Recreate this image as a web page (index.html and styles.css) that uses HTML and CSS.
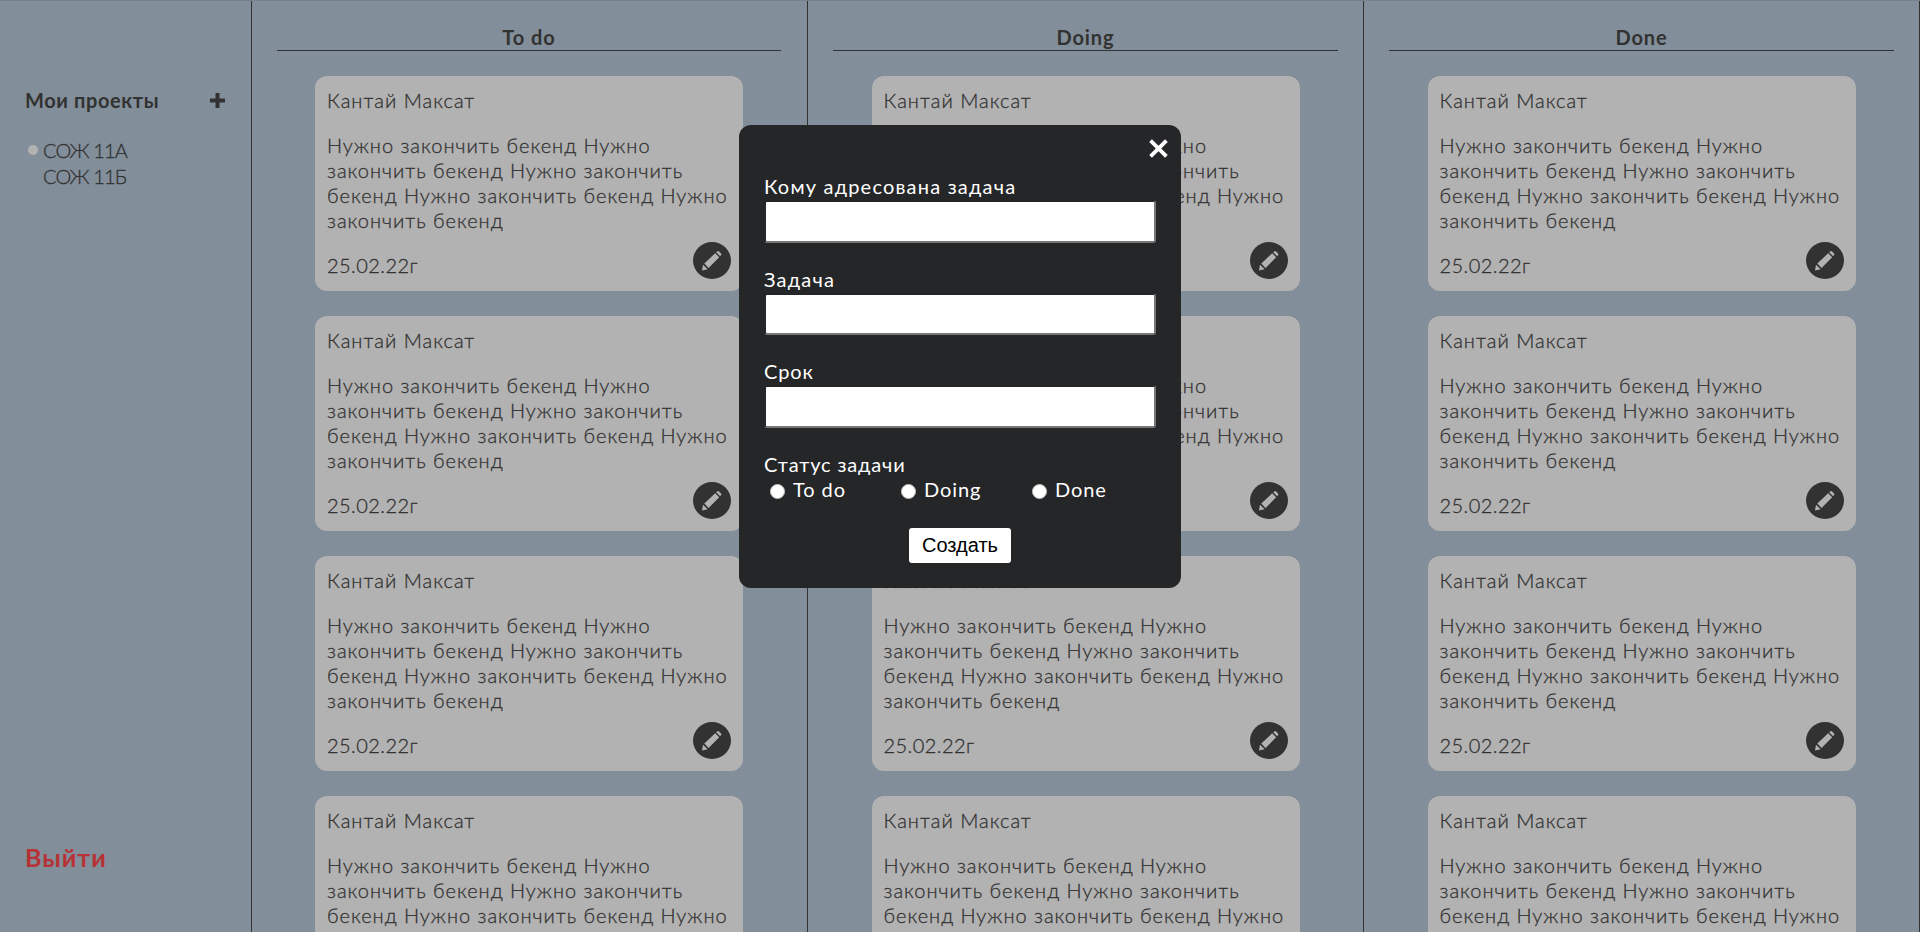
FILE: index.html
```html
<!DOCTYPE html>
<html lang="ru">
<head>
<meta charset="utf-8">
<title>Мои проекты</title>
<link rel="stylesheet" href="styles.css">
</head>
<body>
<div class="app">
  <aside class="sidebar">
    <div class="sidebar-head">
      <h2 class="sidebar-title">Мои проекты</h2>
      <svg class="plus" viewBox="0 0 15 15"><path d="M0 7.5H15M7.5 0V15" stroke="currentColor" stroke-width="4"/></svg>
    </div>
    <ul class="projects">
      <li class="project active">СОЖ 11А</li>
      <li class="project">СОЖ 11Б</li>
    </ul>
    <a class="logout">Выйти</a>
  </aside>
  <main class="board" id="board"></main>
</div>

<form class="modal">
  <svg class="close" viewBox="0 0 18 18"><path d="M1.5 1.5L16.5 16.5M16.5 1.5L1.5 16.5" stroke="currentColor" stroke-width="3.6"/></svg>
  <label class="field"><span class="label label-wide">Кому адресована задача</span><input class="input" type="text"></label>
  <label class="field"><span class="label label-wide">Задача</span><input class="input" type="text"></label>
  <label class="field"><span class="label">Срок</span><input class="input" type="text"></label>
  <div class="status label">Статус задачи</div>
  <div class="radios">
    <label class="radio"><i class="dot"></i><span class="option">To do</span></label>
    <label class="radio"><i class="dot"></i><span class="option">Doing</span></label>
    <label class="radio"><i class="dot"></i><span class="option">Done</span></label>
  </div>
  <button class="submit" type="button">Создать</button>
</form>

<template id="card">
  <article class="card">
    <p class="name">Кантай Максат</p>
    <p class="text">Нужно закончить бекенд Нужно<br>закончить бекенд Нужно закончить<br>бекенд Нужно закончить бекенд Нужно<br>закончить бекенд</p>
    <p class="date">25.02.22г</p>
    <span class="edit"><svg viewBox="0 0 38 37"><ellipse cx="19" cy="18.5" rx="19" ry="18.5" fill="#323232"/><path d="M9 28.5L10 22.7L14.6 27.3ZM11.3 21.6L22.2 11.2L26.2 15.2L15.6 26ZM23.2 10.2L24.5 9.2Q25.3 8.7 26 9.4L28.1 11.5Q28.7 12.3 28.1 13L27.1 14.2Z" fill="#b2b2b2"/></svg></span>
  </article>
</template>
<script src="script.js"></script>
</body>
</html>
```
FILE: styles.css
```css
* { box-sizing: border-box; margin: 0; padding: 0; }
body {
  height: 932px;
  overflow: hidden;
  background: #828e99;
  color: #323232;
  font-family: Lato, "Open Sans", sans-serif;
  font-size: 20px;
  line-height: 25px;
  white-space: nowrap;
}
.app { display: flex; height: 932px; border-top: 1px solid #75808b; }
.sidebar {
  display: flex;
  flex-direction: column;
  width: 252px;
  padding: 86px 26px 60px 25px;
  border-right: 1px solid #323232;
}
.sidebar-head { display: flex; justify-content: space-between; align-items: center; height: 27px; }
.sidebar-title { font-size: 20px; font-weight: 700; letter-spacing: 0.6px; }
.plus { width: 15px; height: 15px; }
.projects { list-style: none; margin-top: 23px; line-height: 26px; font-weight: 300; -webkit-text-stroke: 0.3px; }
.project { display: flex; align-items: center; padding-left: 18px; letter-spacing: -0.9px; }
.active::before { content: ""; width: 10px; height: 10px; margin: 0 5px 0 -15px; border-radius: 50%; background: #b2b2b2; flex: none; }
.logout { margin-top: auto; color: #b73235; font-size: 25px; font-weight: 700; line-height: 30px; letter-spacing: 1px; }
.board { display: flex; flex: 1; }
.column { flex: 0 0 556px; padding: 24px 25px 0; border-right: 1px solid #323232; overflow: hidden; }
.column:first-child { padding-right: 26px; }
.column-title { height: 26px; border-bottom: 1px solid #323232; text-align: center; font-size: 20px; font-weight: 700; letter-spacing: 0.9px; }
.card {
  position: relative;
  width: 428px;
  height: 215px;
  margin: 25px auto 0;
  padding: 12px;
  border-radius: 12px;
  background: #b2b2b2;
  font-weight: 300;
  -webkit-text-stroke: 0.3px;
}
.text { margin: 20px 0; letter-spacing: 0.97px; }
.name { letter-spacing: 1px; }
.date { letter-spacing: 0.45px; }
.edit { position: absolute; right: 12px; bottom: 12px; width: 38px; height: 37px; }
.edit svg { display: block; width: 38px; height: 37px; }
.modal {
  position: absolute;
  left: 739px;
  top: 125px;
  width: 442px;
  height: 463px;
  padding: 49px 25px 25px;
  border-radius: 12px;
  background: #252628;
  color: #fff;
}
.close { position: absolute; right: 13px; top: 14px; width: 19px; height: 19px; }
.field { display: block; margin-bottom: 24px; }
.label { display: block; letter-spacing: 0.85px; }
.label-wide { letter-spacing: 1.2px; }
.input { display: block; width: 392px; height: 42.5px; margin-top: 1px; background: #fff; border: 2px solid; border-color: #252628 #767676 #767676 #252628; border-radius: 3px; }
.radios { display: grid; grid-template-columns: repeat(3, 131px); }
.radio { display: flex; align-items: center; padding-left: 6px; gap: 8px; letter-spacing: 0.9px; }
.dot { width: 15px; height: 15px; margin-top: 4px; border-radius: 50%; background: #fff; border: 1px solid #c4c4c4; }
.submit { display: block; width: 102px; height: 35px; margin: 26px auto 0; border: 0; border-radius: 3px; background: #fff; color: #000; font: 20px "Liberation Sans", Arial, sans-serif; }
```
FILE: script.js
```js
const board = document.getElementById('board');
const card = document.getElementById('card');
for (const title of ['To do', 'Doing', 'Done']) {
  const column = document.createElement('section');
  column.className = 'column';
  const heading = document.createElement('h2');
  heading.className = 'column-title';
  heading.textContent = title;
  column.append(heading);
  for (let i = 0; i < 4; i++) column.append(card.content.cloneNode(true));
  board.append(column);
}
```
